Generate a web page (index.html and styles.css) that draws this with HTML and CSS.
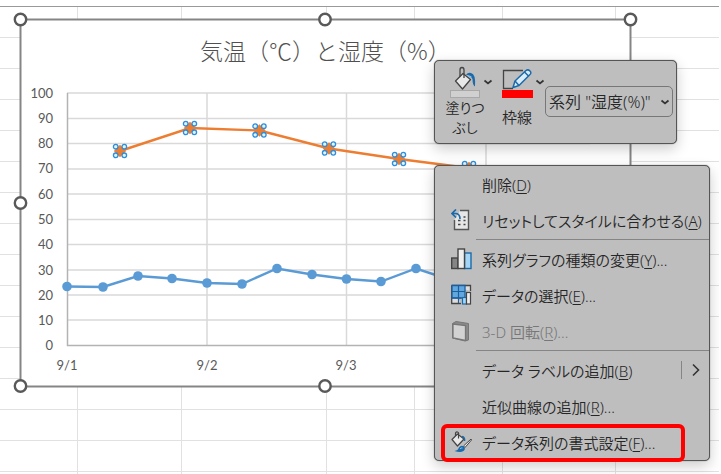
FILE: index.html
```html
<!DOCTYPE html>
<html lang="ja">
<head>
    <meta charset="UTF-8">
    <meta name="viewport" content="width=device-width, initial-scale=1.0">
    <link rel="stylesheet" href="styles.css">
    <title>気温（℃）と湿度（%）</title>
</head>
<body>
    <main class="sheet">
        <div class="columns">
            <span class="col-a"></span>
            <span class="col-b"></span>
            <span class="col-c"></span>
            <span class="col-d"></span>
            <span class="col-d"></span>
            <span class="col-e"></span>
        </div>

        <svg class="chart" width="611" height="368" viewBox="0 0 611 368" role="img" aria-label="気温と湿度のグラフ">
            <defs>
                <marker id="dot" markerUnits="userSpaceOnUse" markerWidth="12" markerHeight="12" refX="6" refY="6">
                    <circle cx="6" cy="6" r="4.8" fill="#5b9bd5"/>
                </marker>
                <marker id="selected" markerUnits="userSpaceOnUse" markerWidth="18" markerHeight="18" refX="9" refY="9">
                    <path d="M9 2.8L15.2 9L9 15.2L2.800 9Z" fill="#ed7d31"/>
                    <g fill="#e4f2fc" stroke="#2b8fdb" stroke-width="1.3">
                        <circle cx="4.7" cy="4.7" r="2.3"/>
                        <circle cx="13.3" cy="4.7" r="2.3"/>
                        <circle cx="4.7" cy="13.3" r="2.3"/>
                        <circle cx="13.3" cy="13.3" r="2.3"/>
                    </g>
                </marker>
            </defs>
            <rect class="chart-area" x="0.5" y="0.5" width="610" height="367"/>
            <text class="chart-title" x="180" y="41">気温（℃）と湿度（%）</text>
            <path class="grid" d="M47 74H570M47 99.5H570M47 124.5H570M47 150H570M47 175H570M47 200.5H570M47 225.5H570M47 251H570M47 276H570M47 301H570M187 74V326M326.5 74V326M466 74V326"/>
            <path class="axis" d="M47.5 74V326.5H570"/>
            <g class="labels" text-anchor="end">
                <text x="33" y="79">100</text>
                <text x="33" y="104">90</text>
                <text x="33" y="129">80</text>
                <text x="33" y="154">70</text>
                <text x="33" y="180">60</text>
                <text x="33" y="205">50</text>
                <text x="33" y="230">40</text>
                <text x="33" y="256">30</text>
                <text x="33" y="281">20</text>
                <text x="33" y="306">10</text>
                <text x="33" y="331">0</text>
            </g>
            <g class="labels" text-anchor="middle">
                <text x="47" y="351">9/1</text>
                <text x="187" y="351">9/2</text>
                <text x="326" y="351">9/3</text>
            </g>
            <polyline class="temperature" points="47,267.5 83,268 118,257 152,259.5 187,264 222,265 257,249.5 292,255.5 326.5,260 361,262.5 396,249.5 431,261"/>
            <polyline class="humidity" points="100,132 170,109 239.5,111.5 309,129.5 379,140 449,149"/>
            <g class="handles">
                <circle cx="0.5" cy="0.5" r="5.7"/>
                <circle cx="305" cy="0.5" r="5.7"/>
                <circle cx="610.5" cy="0.5" r="5.7"/>
                <circle cx="0.5" cy="184" r="5.7"/>
                <circle cx="0.5" cy="367" r="5.7"/>
                <circle cx="305" cy="367" r="5.7"/>
            </g>
        </svg>

        <div class="popup">
            <div class="toolbar" role="toolbar">
                <div class="tools">
                    <button class="tool">
                        <span class="tool-main">
                            <svg width="32" height="34" viewBox="0 0 32 34">
                                <path d="M6.5 17L14 9.5L21.5 15.5L13.5 25Z" fill="#e8e8e8" stroke="#444" stroke-width="1.3" stroke-linejoin="round"/>
                                <path d="M11 12.5V6Q11 3.5 13 3.5T15 6V14" fill="none" stroke="#444" stroke-width="1.3"/>
                                <path d="M17 11Q19 8 22 9Q27 10 26 22.5Q23.5 21 23.5 15Q21 10.5 17 11Z" fill="#1c6aa9"/>
                                <path d="M18.5 11.5L21.5 14.5L22.5 12Z" fill="#83beec"/>
                                <rect x="1.5" y="26.5" width="29" height="7" fill="#d0d0d0" stroke="#a8a8a8"/>
                            </svg>
                            <span class="tool-label">塗りつ<br>ぶし</span>
                        </span>
                        <svg class="arrow" width="10" height="8" viewBox="0 0 10 8"><path d="M1.5 2.5L5 5.5L8.5 2.5"/></svg>
                    </button>
                    <button class="tool">
                        <span class="tool-main">
                            <svg width="32" height="34" viewBox="0 0 32 34">
                                <path d="M22 6.5H2.5V24.5H12" fill="none" stroke="#444" stroke-width="1.3"/>
                                <path d="M12 23.5L14 17L25 6.5Q27 5 29 7T28.5 11L18 21.5Z" fill="#d9ecfa" stroke="#1c6aa9" stroke-width="1.5" stroke-linejoin="round"/>
                                <path d="M14 17L18 21.5M23.5 8L27.5 12" stroke="#1c6aa9" stroke-width="1.5"/>
                                <rect x="1" y="26" width="31" height="8" fill="#f00"/>
                            </svg>
                            <span class="tool-label single">枠線</span>
                        </span>
                        <svg class="arrow" width="10" height="8" viewBox="0 0 10 8"><path d="M1.5 2.5L5 5.5L8.5 2.5"/></svg>
                    </button>
                </div>
                <div class="series">
                    <select aria-label="グラフ要素">
                        <option>系列 "湿度(%)"</option>
                    </select>
                    <svg class="arrow" width="10" height="8" viewBox="0 0 10 8"><path d="M1.5 2.5L5 5.5L8.5 2.5"/></svg>
                </div>
            </div>

            <div class="menu" role="menu">
                <button class="item" role="menuitem">
                    <span class="icon"></span>
                    <span>削除(<u>D</u>)</span>
                </button>
                <button class="item" role="menuitem">
                    <svg class="icon" viewBox="0 0 21 22">
                        <path d="M9 1.5H17.5V20.5H3.5V11" fill="#e6e6e6" stroke="#555" stroke-width="1.4"/>
                        <path d="M5 0.5L1 4.5L5 8.5M1.5 4.5H5Q9 5 9 10" fill="none" stroke="#1c6aa9" stroke-width="1.7"/>
                        <path d="M7 11.5H9.5M7 15.5H9.5M12.5 8H14.5M12.5 11.5H14.5M12.5 15.5H14.5" stroke="#444" stroke-width="1.7"/>
                    </svg>
                    <span>リセットしてスタイルに合わせる(<u>A</u>)</span>
                </button>
                <hr>
                <button class="item" role="menuitem">
                    <svg class="icon" viewBox="0 0 21 22">
                        <rect x="0.7" y="10" width="6.3" height="10.5" fill="#858585" stroke="#444" stroke-width="1.4"/>
                        <rect x="13.5" y="5" width="6.5" height="15.5" fill="#a5d5f5" stroke="#1c6aa9" stroke-width="1.4"/>
                        <rect x="7" y="1" width="6.5" height="19.5" fill="#eee" stroke="#444" stroke-width="1.4"/>
                    </svg>
                    <span>系列グラフの種類の変更(<u>Y</u>)...</span>
                </button>
                <button class="item" role="menuitem">
                    <svg class="icon" viewBox="0 0 21 22">
                        <path d="M0.7 1.5H19.5V7M0.7 1.5V19.5H10" fill="#ddd" stroke="#444" stroke-width="1.3"/>
                        <path d="M1 1.5H14V14H1Z" fill="#62a8df" stroke="#1c5f9e" stroke-width="1.3"/>
                        <path d="M1 7.5H14M7.5 1.5V19M1 14H10" fill="none" stroke="#1c5f9e" stroke-width="1.2"/>
                        <rect x="11.5" y="13.5" width="4" height="6.5" fill="#a5d5f5" stroke="#1c6aa9" stroke-width="1.2"/>
                        <rect x="15.5" y="8.5" width="4" height="11.5" fill="#eee" stroke="#444" stroke-width="1.2"/>
                    </svg>
                    <span>データの選択(<u>E</u>)...</span>
                </button>
                <button class="item" role="menuitem" disabled>
                    <svg class="icon" viewBox="0 0 21 22">
                        <path d="M1.5 3.5L5 1.5L17.5 3.5V20L14 21L1.5 18Z" fill="#8a8a8a" stroke="#777" stroke-linejoin="round"/>
                        <path d="M2 4L14.5 5.5V20.5L2 18Z" fill="#d2d2d2" stroke="#777" stroke-width="1.3"/>
                    </svg>
                    <span>3-D 回転(<u>R</u>)...</span>
                </button>
                <hr>
                <button class="item" role="menuitem" aria-haspopup="true">
                    <span class="icon"></span>
                    <span>データ ラベルの追加(<u>B</u>)</span>
                    <span class="submenu">
                        <svg width="10" height="14" viewBox="0 0 10 14"><path d="M2 1.5L7.5 7L2 12.5" fill="none" stroke="#333" stroke-width="1.6"/></svg>
                    </span>
                </button>
                <button class="item" role="menuitem">
                    <span class="icon"></span>
                    <span>近似曲線の追加(<u>R</u>)...</span>
                </button>
                <button class="item marked" role="menuitem">
                    <svg class="icon" viewBox="0 0 21 22">
                        <path d="M1 8.5L6.5 3L13 8L6.5 15Z" fill="#e8e8e8" stroke="#444" stroke-width="1.2" stroke-linejoin="round"/>
                        <path d="M4.5 5V2Q5 0.5 6.5 1T7.5 3V7.5" fill="none" stroke="#444" stroke-width="1.2"/>
                        <path d="M11 5.5Q14 6 13.5 10" fill="none" stroke="#1c6aa9" stroke-width="1.6"/>
                        <path d="M20 8L12.5 15L14 16.5L20.5 9Z" fill="#eee" stroke="#444"/>
                        <path d="M3.5 20Q7 19.5 8 16.5Q10 13.5 13 15.5Q15 18 12.5 20Q9.5 22 3.5 20Z" fill="#1c6aa9"/>
                        <path d="M9 18Q10 16.5 11.5 17" fill="none" stroke="#83beec"/>
                    </svg>
                    <span>データ系列の書式設定(<u>F</u>)...</span>
                </button>
            </div>
        </div>
    </main>
</body>
</html>
```

FILE: styles.css
```css
* {
    box-sizing: border-box;
}

body {
    margin: 0;
    background-color: #fff;
    color: #262626;
    font-family: "Noto Sans", "Noto Sans CJK JP", sans-serif;
    font-size: 15px;
    font-weight: 350;
}

button,
select {
    font: inherit;
    color: inherit;
    font-feature-settings: "palt";
}

/* worksheet */
.sheet {
    position: relative;
    min-height: 100vh;
    margin-right: 2px;
    padding: 60px 0 12px 434px;
    overflow: hidden;
    background: repeating-linear-gradient(#fff 0 30px, #e1e1e1 30px 31px) 0 7px;
}

.columns {
    position: absolute;
    inset: 6px 0 0;
    display: flex;
    border-top: 1px solid #999;
}

.columns span {
    flex: none;
    border-right: 1px solid #e1e1e1;
}

.col-a {
    width: 78px;
}

.col-b {
    width: 104px;
}

.col-c {
    width: 145px;
}

.col-d {
    width: 88px;
}

.col-e {
    width: 113px;
}

/* chart object */
.chart {
    position: absolute;
    top: 19px;
    left: 20px;
    overflow: visible;
}

.chart-area {
    fill: #fff;
    stroke: #858585;
    stroke-width: 2;
}

.chart-title {
    font-family: "Noto Sans CJK JP", sans-serif;
    font-size: 23px;
    font-weight: 300;
    fill: #505050;
}

.grid {
    stroke: #d9d9d9;
    stroke-width: 1.5;
}

.axis {
    fill: none;
    stroke: #b3b3b3;
    stroke-width: 1.5;
}

.labels {
    font-family: Lato, sans-serif;
    font-size: 13px;
    font-weight: 400;
    fill: #595959;
}

.temperature,
.humidity {
    fill: none;
    stroke-width: 2.4;
}

.temperature {
    stroke: #5b9bd5;
    marker: url(#dot);
}

.humidity {
    stroke: #ed7d31;
    marker: url(#selected);
}

.handles {
    fill: #fff;
    stroke: #595959;
    stroke-width: 2.4;
}

/* mini toolbar and context menu */
.popup {
    position: relative;
    display: flex;
    flex-direction: column;
    align-items: flex-start;
    gap: 21px;
}

.toolbar,
.menu {
    background-color: #bebebe;
    border: 1px solid #555;
    border-radius: 5px;
    box-shadow: 0 0 1px #555, 0 5px 14px rgba(0, 0, 0, 0.2);
}

.toolbar {
    display: flex;
    align-items: flex-start;
    height: 84px;
    padding: 3px 3px 0 12px;
}

.tools {
    display: flex;
    align-items: flex-start;
    gap: 6px;
}

.tool {
    display: flex;
    padding: 0;
    border: none;
    background: none;
}

.tool-main {
    display: flex;
    flex-direction: column;
    align-items: center;
    width: 36px;
}

.tool-label {
    font-size: 14px;
    line-height: 20px;
    white-space: nowrap;
}

.tool-label.single {
    font-size: 15px;
    line-height: 38px;
}

.arrow {
    flex: none;
    margin-top: 14px;
    fill: none;
    stroke: #333;
    stroke-width: 1.7;
}

.series {
    position: relative;
    margin-top: 22px;
}

.series select {
    appearance: none;
    width: 128px;
    height: 31px;
    padding: 0 0 0 3px;
    border: 1px solid #777;
    border-radius: 5px;
    background: none;
    font-size: 16px;
}

.series .arrow {
    position: absolute;
    right: 3px;
    top: 12px;
    margin: 0;
    pointer-events: none;
}

.menu {
    width: 276px;
}

.item {
    display: flex;
    align-items: center;
    gap: 10px;
    width: 100%;
    height: 36px;
    padding: 0 8px 0 16px;
    border: none;
    background: none;
    text-align: left;
    white-space: nowrap;
}

.item:disabled {
    color: #777;
}

.item u {
    text-underline-offset: 2px;
}

.icon {
    flex: none;
    width: 21px;
    height: 22px;
}

.menu hr {
    height: 1px;
    margin: 1px 0 1px 41px;
    border: none;
    background-color: #858585;
}

.submenu {
    display: flex;
    margin-left: auto;
    padding: 2px 0 2px 9px;
    border-left: 1px solid #858585;
}

/* red frame around the entry to click */
.marked {
    position: relative;
}

.marked::after {
    content: "";
    position: absolute;
    inset: 0 24px -2px 6px;
    border: 4px solid #f00;
    border-radius: 6px;
}
```
